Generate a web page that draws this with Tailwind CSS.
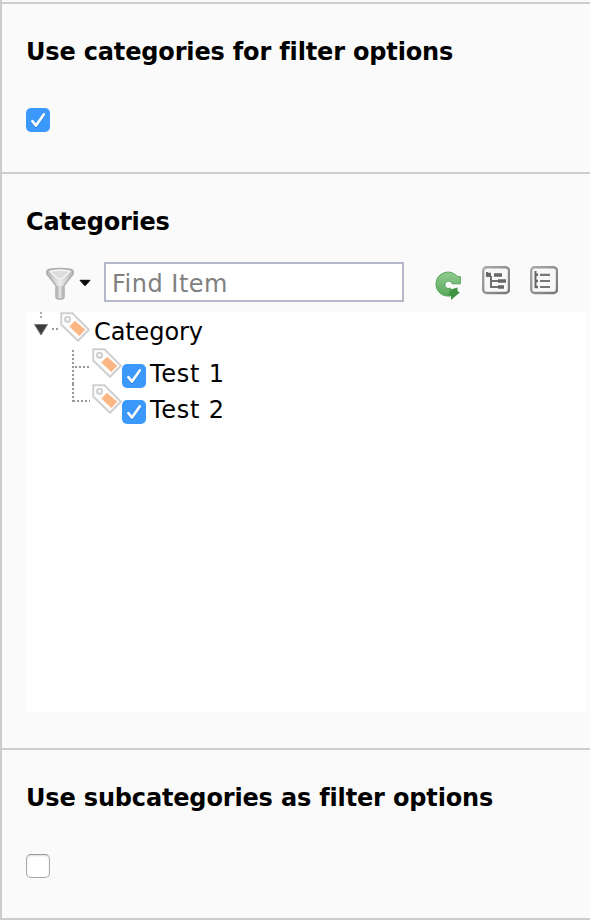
<!DOCTYPE html>
<html lang="en">
<head>
<meta charset="utf-8">
<title>Filter options</title>
<script src="https://cdn.jsdelivr.net/npm/@tailwindcss/browser@4"></script>
</head>
<body class="bg-[#fafafa] text-black font-['DejaVu_Sans',Verdana,sans-serif] text-[24px] overflow-hidden">
<svg class="absolute size-0">
  <defs>
    <linearGradient id="metal" x1="0" x2="1"><stop offset="0" stop-color="#b4b4b4"/><stop offset=".5" stop-color="#ececec"/><stop offset="1" stop-color="#b4b4b4"/></linearGradient>
    <linearGradient id="stem" x1="0" x2="1"><stop offset="0" stop-color="#aaa"/><stop offset=".5" stop-color="#e8e8e8"/><stop offset="1" stop-color="#aaa"/></linearGradient>
    <linearGradient id="edge" x1="0" y1="0" x2="1" y2="1"><stop offset="0" stop-color="#aaa"/><stop offset="1" stop-color="#777"/></linearGradient>
    <linearGradient id="green" x1="0" y1="0" x2="0" y2="1"><stop offset="0" stop-color="#90cb91"/><stop offset="1" stop-color="#5aa95c"/></linearGradient>
  </defs>
  <symbol id="tag" viewBox="0 0 32 32">
    <path d="M1.2 1.2H12.5L28.8 17.7L18 28.8L1.2 12.5Z" fill="#fdfdfd" stroke="#d0d0d0" stroke-width="2" stroke-linejoin="round"/>
    <circle cx="7.5" cy="7.3" r="2.6" fill="#f8f8f8" stroke="#c8c8c8" stroke-width="1.6"/>
    <path d="M15 8.7L25.3 17.8L19.3 24L9.3 14.5Z" fill="#fcb683"/>
  </symbol>
  <symbol id="check" viewBox="0 0 24 24">
    <rect width="24" height="24" rx="5" fill="#3b99fc"/>
    <path d="M6.3 14.2L10 18.6L17.8 7.4" fill="none" stroke="#277fdc" stroke-width="2.5" stroke-linecap="round" stroke-linejoin="round"/>
    <path d="M6.3 13.2L10 17.6L17.8 6.4" fill="none" stroke="#fff" stroke-width="2.6" stroke-linecap="round" stroke-linejoin="round"/>
  </symbol>
</svg>
<main class="h-[920px] border-l-2 border-b-2 border-[#ccc] pt-[2px] flex flex-col">
  <section class="h-[170px] border-t-2 border-[#ccc] pl-6 pt-[33px] flex flex-col">
    <h2 class="h-[30px] leading-[30px] font-bold whitespace-nowrap tracking-[-0.16px]">Use categories for filter options</h2>
    <svg class="mt-[41px] size-6" role="checkbox" aria-checked="true"><use href="#check"/></svg>
  </section>

  <section class="h-[576px] border-t-2 border-[#ccc] pl-6 pt-[33px] flex flex-col">
    <h2 class="h-[30px] leading-[30px] font-bold whitespace-nowrap tracking-[-0.22px]">Categories</h2>
    <div class="mt-[25px] h-10 flex items-start">
      <svg class="ml-[18px] mt-[4px] w-[48px] h-[36px] shrink-0" viewBox="0 0 48 36">
        <path d="M2.8 5Q3 2.6 16 2.6Q29 2.6 29.2 5V8L20 19.5V31Q19.5 33 16 33Q12.5 33 12 31V19.5L2.8 8Z" fill="url(#metal)" stroke="#b0b0b0" stroke-width="1.6" stroke-linejoin="round"/>
        <path d="M12.8 20H19.2V31Q16 33 12.8 31Z" fill="url(#stem)"/>
        <path d="M6 5.5Q16 3 26 5.5L19 12Q16 14 13 12Z" fill="#dcdcdc" stroke="#f4f4f4" stroke-width="1.4" stroke-linejoin="round"/>
        <path d="M36 14.3H46L41 19.8Z" fill="#050505" stroke="#050505" stroke-linejoin="round"/>
      </svg>
      <div class="ml-[12px] w-[300px] h-10 bg-white border-2 border-[#b5b8c8] pl-[6px] pt-px leading-[38px] text-[#808080] whitespace-nowrap"><span class="tracking-[0.5px]">Find Item</span></div>
      <svg class="ml-[30px] mt-[8px] w-[28px] h-[30px]" viewBox="0 0 28 30">
        <path d="M26.3 13.8H18.2A3.7 3.7 0 1 0 16.5 18L16.8 26C8 27 2 21.5 2 14A12 12 0 0 1 21.5 4.8L24 6.8L26.3 6.5Z" fill="url(#green)" stroke="#55a557" stroke-width="1" stroke-linejoin="round"/>
        <path d="M16.5 19.5L23.5 17.5V21L25.8 22.5L17 30V26L14.5 25.5Z" fill="#3f9342"/>
      </svg>
      <svg class="ml-[20px] mt-[4px] w-[28px] h-[29px]" viewBox="0 0 28 29">
        <rect x="1.2" y="1.2" width="25.8" height="25.8" rx="3.5" fill="#f8f8f8" stroke="url(#edge)" stroke-width="2.4"/>
        <path d="M5 6V10H9M9 10V15H17M9 15V21H17" fill="none" stroke="#707070" stroke-width="2"/>
        <path d="M4 8.5H9M12 9H20M16 15H24M16 21H22" fill="none" stroke="#666" stroke-width="3.6"/>
      </svg>
      <svg class="ml-[20px] mt-[4px] w-[28px] h-[29px]" viewBox="0 0 28 29">
        <rect x="1.2" y="1.2" width="25.8" height="25.8" rx="3.5" fill="#f8f8f8" stroke="url(#edge)" stroke-width="2.4"/>
        <path d="M5.5 5V22" stroke="#666" stroke-width="2"/>
        <path d="M5 8.8H8M5 15H8M5 21H8" stroke="#666" stroke-width="2.5"/>
        <path d="M10 8.8H20M10 15H20M10 21H20" stroke="#777" stroke-width="2.2"/>
      </svg>
    </div>
    <div class="mt-[10px] w-[560px] h-[400px] bg-white whitespace-nowrap">
      <div class="h-9 flex">
        <svg class="w-[34px] h-9" viewBox="0 0 34 36">
          <path d="M15 0V7" stroke="#aaa" stroke-width="2" stroke-dasharray="2 2"/>
          <path d="M26 17H34" stroke="#999" stroke-width="2" stroke-dasharray="2 2"/>
          <path d="M8.5 12.5H21.5L15 23Z" fill="#3c3c3c" stroke="#777"/>
        </svg>
        <svg class="size-8"><use href="#tag"/></svg>
        <span class="ml-[2px] leading-[40px] tracking-[-0.1px]">Category</span>
      </div>
      <div class="h-9 flex">
        <svg class="ml-[44px] w-[22px] h-9" viewBox="0 0 22 36"><path d="M3 2V36M5 19H20" stroke="#999" stroke-width="2" stroke-dasharray="2 2"/></svg>
        <svg class="size-8"><use href="#tag"/></svg>
        <svg class="-ml-[2px] mt-4 size-6" role="checkbox" aria-checked="true"><use href="#check"/></svg>
        <span class="ml-1 mt-2 leading-[36px] tracking-[0.75px]">Test 1</span>
      </div>
      <div class="h-9 flex">
        <svg class="ml-[44px] w-[22px] h-9" viewBox="0 0 22 36"><path d="M3 0V18M3 17H20" fill="none" stroke="#999" stroke-width="2" stroke-dasharray="2 2"/></svg>
        <svg class="size-8"><use href="#tag"/></svg>
        <svg class="-ml-[2px] mt-4 size-6" role="checkbox" aria-checked="true"><use href="#check"/></svg>
        <span class="ml-1 mt-2 leading-[36px] tracking-[0.75px]">Test 2</span>
      </div>
    </div>
  </section>

  <section class="h-[170px] border-t-2 border-[#ccc] pl-6 pt-[33px] flex flex-col">
    <h2 class="h-[30px] leading-[30px] font-bold whitespace-nowrap tracking-[-0.16px]">Use subcategories as filter options</h2>
    <div class="mt-[41px] size-6 rounded-[5px] border border-[#aaa] border-t-[#999] bg-white shadow-[inset_0_1px_2px_#ddd]" role="checkbox" aria-checked="false"></div>
  </section>
</main>
</body>
</html>
